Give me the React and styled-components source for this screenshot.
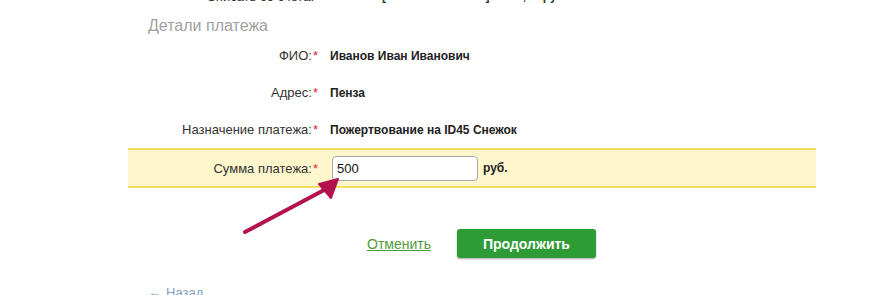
import React from "react";
import styled, { createGlobalStyle } from "styled-components";

const Global = createGlobalStyle`
  html, body { margin: 0; padding: 0; background: #fff; }
  body { font-family: "Liberation Sans", Arial, sans-serif; overflow: hidden; }
`;

const Page = styled.div`
  position: relative;
  width: 887px;
  height: 295px;
  overflow: hidden;
`;

const Form = styled.div`
  width: 688px;
  margin-left: 128px;
  margin-top: -14px;
  display: flex;
  flex-direction: column;
`;

const TopRow = styled.div`
  display: grid;
  grid-template-columns: 186px 1fr;
  column-gap: 38px;
  height: 20px;
  align-items: center;
  font-size: 13px;
  color: #333;
`;

const TopLabel = styled.div`
  text-align: right;
`;

const TopValue = styled.div`
  font-weight: bold;
  font-size: 12px;
`;

const Heading = styled.h3`
  margin: 0;
  padding-left: 20px;
  height: 31px;
  line-height: 39px;
  font-size: 16px;
  font-weight: normal;
  color: #a0a0a0;
`;

const Row = styled.div`
  display: grid;
  grid-template-columns: 192px 1fr;
  column-gap: ${(p) => (p.$highlight ? "12px" : "10px")};
  align-items: center;
  height: ${(p) => (p.$highlight ? "36px" : "37px")};
  background: ${(p) => (p.$highlight ? "#fff7cc" : "transparent")};
  border-top: ${(p) => (p.$highlight ? "2px solid #f4dc62" : "none")};
  border-bottom: ${(p) => (p.$highlight ? "2px solid #f4dc62" : "none")};
`;

const Label = styled.div`
  text-align: right;
  font-size: 13px;
  color: #333;
  padding-right: 2px;
`;

const Star = styled.span`
  color: #e0242a;
  margin-left: 1px;
`;

const Value = styled.div`
  font-size: 12px;
  font-weight: bold;
  color: #222;
`;

const InputWrap = styled.div`
  display: flex;
  align-items: center;
  gap: 5px;
`;

const Input = styled.input`
  box-sizing: border-box;
  width: 146px;
  height: 25px;
  padding: 0 4px;
  border: 1px solid #a9a9a9;
  border-radius: 4px;
  background: #fff;
  font-family: "Liberation Sans", Arial, sans-serif;
  font-size: 13px;
  color: #111;
  outline: none;
`;

const Unit = styled.span`
  font-size: 12px;
  font-weight: bold;
  color: #222;
`;

const Actions = styled.div`
  display: flex;
  align-items: center;
  gap: 26px;
  padding-left: 239px;
  margin-top: 41px;
`;

const CancelLink = styled.a`
  font-size: 14px;
  color: #4f9a3b;
  text-decoration: underline;
  cursor: pointer;
`;

const Primary = styled.button`
  width: 139px;
  height: 29px;
  border: none;
  border-radius: 3px;
  background: #2e9c36;
  color: #fff;
  font-family: "Liberation Sans", Arial, sans-serif;
  font-size: 14px;
  font-weight: bold;
  box-shadow: 0 1px 2px rgba(0, 0, 0, 0.35);
  cursor: pointer;
`;

const Back = styled.a`
  display: flex;
  align-items: center;
  gap: 5px;
  margin-top: 27px;
  padding-left: 20px;
  font-size: 13px;
  color: #7ea0bd;
  text-decoration: none;
`;

const Pointer = styled.svg`
  position: absolute;
  left: 0;
  top: 0;
  pointer-events: none;
`;

export default function App() {
  return (
    <Page>
      <Global />
      <Form>
        <TopRow>
          <TopLabel>Списать со счета:</TopLabel>
          <TopValue>7646 [MasterCard Mass] 5 255,04 руб.</TopValue>
        </TopRow>
        <Heading>Детали платежа</Heading>
        <Row>
          <Label>
            ФИО:<Star>*</Star>
          </Label>
          <Value>Иванов Иван Иванович</Value>
        </Row>
        <Row>
          <Label>
            Адрес:<Star>*</Star>
          </Label>
          <Value>Пенза</Value>
        </Row>
        <Row>
          <Label>
            Назначение платежа:<Star>*</Star>
          </Label>
          <Value>Пожертвование на ID45 Снежок</Value>
        </Row>
        <Row $highlight>
          <Label>
            Сумма платежа:<Star>*</Star>
          </Label>
          <InputWrap>
            <Input defaultValue="500" />
            <Unit>руб.</Unit>
          </InputWrap>
        </Row>
        <Actions>
          <CancelLink>Отменить</CancelLink>
          <Primary>Продолжить</Primary>
        </Actions>
        <Back>
          <span>←</span>
          <span>Назад</span>
        </Back>
      </Form>
      <Pointer width="887" height="295" viewBox="0 0 887 295">
        <line x1="245" y1="232" x2="326" y2="189" stroke="#b3124e" strokeWidth="4" strokeLinecap="round" />
        <polygon points="338,179 319,184 331,198" fill="#b3124e" stroke="#b3124e" strokeWidth="2" strokeLinejoin="round" />
      </Pointer>
    </Page>
  );
}
